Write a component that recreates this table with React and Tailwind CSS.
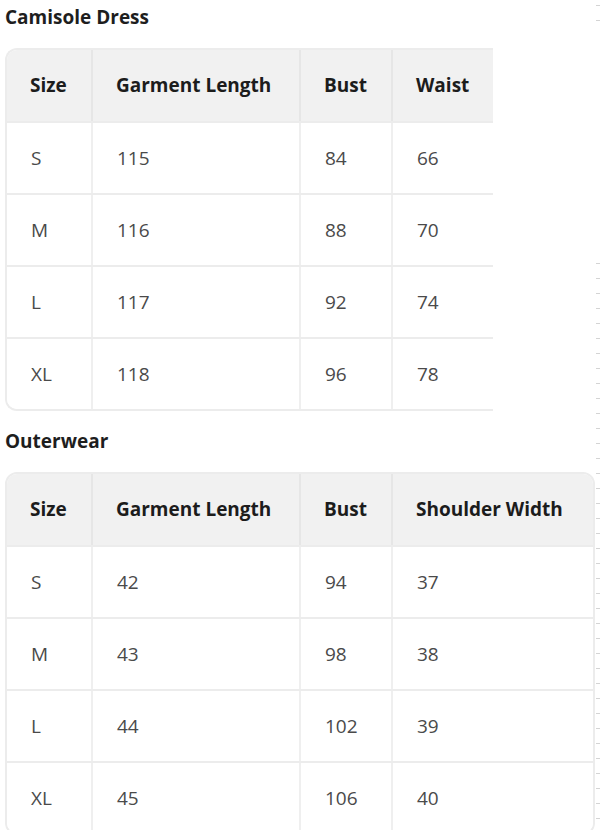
const camisole = {
  title: "Camisole Dress",
  head: ["Size", "Garment Length", "Bust", "Waist"],
  rows: [
    ["S", "115", "84", "66"],
    ["M", "116", "88", "70"],
    ["L", "117", "92", "74"],
    ["XL", "118", "96", "78"],
  ],
};

const outerwear = {
  title: "Outerwear",
  head: ["Size", "Garment Length", "Bust", "Shoulder Width"],
  rows: [
    ["S", "42", "94", "37"],
    ["M", "43", "98", "38"],
    ["L", "44", "102", "39"],
    ["XL", "45", "106", "40"],
  ],
};

const cols = "grid grid-cols-[84px_208px_92px_1fr]";

const SizeTable = ({ data, open }) => {
  return (
    <div
      className={
        open
          ? "w-[488px] border-2 border-r-0 border-[#ececec] rounded-l-[12px] overflow-hidden"
          : "w-[590px] border-2 border-[#ececec] rounded-[12px] overflow-hidden"
      }
    >
      <div className={`${cols} h-[71px] bg-[#f1f1f1]`}>
        {data.head.map((h, i) => (
          <div
            key={h}
            className={`flex items-center pl-[23px] text-[19px] font-bold text-[#1c1c1c] ${
              i > 0 ? "border-l-2 border-[#e6e6e6]" : ""
            }`}
          >
            {h}
          </div>
        ))}
      </div>
      {data.rows.map((r, ri) => (
        <div key={ri} className={`${cols} h-[72px] border-t-2 border-[#ececec] bg-white`}>
          {r.map((c, i) => (
            <div
              key={i}
              className={`flex items-center pl-[24px] text-[19px] text-[#4a4a4a] ${
                i > 0 ? "border-l-2 border-[#efefef]" : ""
              }`}
            >
              {c}
            </div>
          ))}
        </div>
      ))}
    </div>
  );
};

export default function App() {
  return (
    <div className="flex w-[600px] min-h-[830px] bg-white font-['Open_Sans',sans-serif]">
      <div className="flex-1 pl-[5px] pt-[5px]">
        <h2 className="h-[24px] leading-[24px] text-[19px] font-bold text-[#1e1e1e]">
          {camisole.title}
        </h2>
        <div className="mt-[19px]">
          <SizeTable data={camisole} open />
        </div>
        <h2 className="mt-[18px] h-[24px] leading-[24px] text-[19px] font-bold text-[#1e1e1e]">
          {outerwear.title}
        </h2>
        <div className="mt-[19px]">
          <SizeTable data={outerwear} />
        </div>
      </div>
      <div className="w-[4px] pt-[5px]">
        <div className="h-[16px] bg-[repeating-linear-gradient(to_bottom,#d4d4d4_0px,#d4d4d4_1px,transparent_1px,transparent_15px)]" />
        <div className="mt-[242px] h-[567px] bg-[repeating-linear-gradient(to_bottom,#d4d4d4_0px,#d4d4d4_1px,transparent_1px,transparent_15px)]" />
      </div>
    </div>
  );
}
